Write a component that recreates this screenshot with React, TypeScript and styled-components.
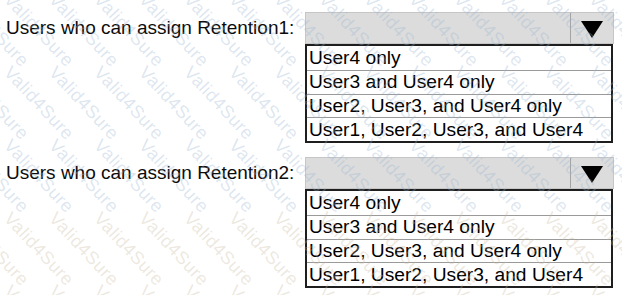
import React from 'react';
import styled, { createGlobalStyle } from 'styled-components';

const GlobalStyle = createGlobalStyle`
  html, body {
    margin: 0;
    padding: 0;
    background: #fff;
  }
  body {
    font-family: "Liberation Sans", Arial, sans-serif;
  }
`;

const OPTIONS = [
  'User4 only',
  'User3 and User4 only',
  'User2, User3, and User4 only',
  'User1, User2, User3, and User4',
];

const QUESTIONS = [
  'Users who can assign Retention1:',
  'Users who can assign Retention2:',
];

const App: React.FC = () => {
  // watermark tiles: 45px columns, 73px rows
  const marks: { x: number; y: number; warm: boolean }[] = [];
  for (let row = -1; row < 4; row++) {
    for (let col = -1; col < 14; col++) {
      const y = row * 73 + 63;
      marks.push({ x: col * 45 + 14, y, warm: y > 150 });
    }
  }

  return (
    <Page>
      <GlobalStyle />
      {QUESTIONS.map((q) => (
        <Block key={q}>
          <Label>{q}</Label>
          <Select>
            <Header>
              <ArrowCell>
                <Triangle />
              </ArrowCell>
            </Header>
            <List>
              {OPTIONS.map((o, i) => (
                <Option key={o} first={i === 0}>
                  {o}
                </Option>
              ))}
            </List>
          </Select>
        </Block>
      ))}
      <Watermark aria-hidden>
        {marks.map((m, i) => (
          <Mark key={i} warm={m.warm} style={{ left: m.x, top: m.y }}>
            Valid4Sure
          </Mark>
        ))}
      </Watermark>
    </Page>
  );
};

const Page = styled.div`
  position: relative;
  width: 622px;
  height: 295px;
  overflow: hidden;
  box-sizing: border-box;
  padding: 12px 8px 0 6px;
  display: flex;
  flex-direction: column;
  gap: 14px;
`;

const Block = styled.div`
  display: grid;
  grid-template-columns: 299px 309px;
  align-items: start;
`;

const Label = styled.div`
  height: 32px;
  line-height: 31px;
  font-size: 19px;
  color: #0c0c0c;
  white-space: nowrap;
`;

const Select = styled.div`
  display: flex;
  flex-direction: column;
`;

const Header = styled.div`
  height: 32px;
  box-sizing: border-box;
  border: 1px solid #c6c6c6;
  background: #dcdcdc;
  display: flex;
  justify-content: flex-end;
`;

const ArrowCell = styled.div`
  width: 42px;
  border-left: 1px solid #a4a4a4;
  display: flex;
  align-items: center;
  justify-content: center;
`;

const Triangle = styled.div`
  width: 0;
  height: 0;
  border-left: 11px solid transparent;
  border-right: 11px solid transparent;
  border-top: 17px solid #000;
  margin-top: 2px;
`;

const List = styled.div`
  width: 308px;
  height: 99px;
  box-sizing: border-box;
  border: 2px solid #1e1e1e;
  display: grid;
  grid-template-rows: repeat(4, 1fr);
  background: #fff;
`;

const Option = styled.div<{ first?: boolean }>`
  border-top: ${(p) => (p.first ? 'none' : '1px solid #9a9a9a')};
  padding-left: 2px;
  font-size: 19.2px;
  color: #000;
  display: flex;
  align-items: center;
  white-space: nowrap;
`;

const Watermark = styled.div`
  position: absolute;
  inset: 0;
  pointer-events: none;
  overflow: hidden;
`;

const Mark = styled.span<{ warm?: boolean }>`
  position: absolute;
  transform: rotate(47deg);
  transform-origin: left top;
  font-size: 18px;
  line-height: 18px;
  letter-spacing: 0.6px;
  white-space: nowrap;
  color: ${(p) => (p.warm ? 'rgba(200, 184, 158, 0.32)' : 'rgba(150, 180, 208, 0.32)')};
`;

export default App;
